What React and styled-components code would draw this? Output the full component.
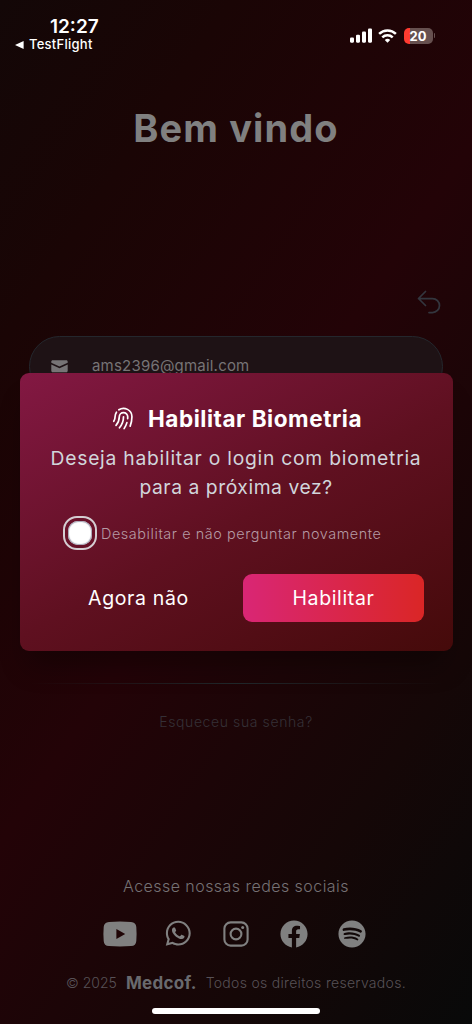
import React from 'react';
import styled, { createGlobalStyle } from 'styled-components';
import { HiOutlineFingerPrint, HiOutlineArrowUturnLeft } from 'react-icons/hi2';
import { FaFacebook, FaSpotify, FaWhatsapp } from 'react-icons/fa';

const App = () => {
    return (<Screen>
        <GlobalStyle />
        <StatusBar>
            <Clock>
                <Time>12:27</Time>
                <BackApp>
                    <svg width='9' height='8' viewBox='0 0 9 8'><path d='M0 4 8.6 0v8z' fill='#fff' /></svg>
                    <span>TestFlight</span>
                </BackApp>
            </Clock>
            <Indicators>
                <svg width='22' height='15' viewBox='0 0 22 15' fill='#fff'>
                    <rect x='0' y='9.5' width='4' height='5.2' rx='1.1' />
                    <rect x='6' y='6.8' width='4' height='7.9' rx='1.1' />
                    <rect x='12' y='3.6' width='4' height='11.1' rx='1.1' />
                    <rect x='18' y='0.4' width='4' height='14.3' rx='1.1' />
                </svg>
                <svg width='19' height='14' viewBox='0 0 19 14' fill='none' stroke='#fff' strokeWidth='2.5'>
                    <path d='M1.1 4.9a12 12 0 0 1 16.8 0' />
                    <path d='M4.3 8.3a7.4 7.4 0 0 1 10.4 0' />
                    <path d='M9.5 13.8 6.8 11a3.8 3.8 0 0 1 5.4 0z' fill='#fff' stroke='none' />
                </svg>
                <Battery>
                    <BatteryBody>20</BatteryBody>
                    <BatteryCap />
                </Battery>
            </Indicators>
        </StatusBar>
        <Title>Bem vindo</Title>
        <BackRow><HiOutlineArrowUturnLeft /></BackRow>
        <EmailField>
            <MailIcon />
            <span>ams2396@gmail.com</span>
        </EmailField>
        <Modal>
            <ModalTitle>
                <HiOutlineFingerPrint />
                <h2>Habilitar Biometria</h2>
            </ModalTitle>
            <Question>
                <Line $spacing='0.75px'>Deseja habilitar o login com biometria</Line>
                <Line $spacing='0.55px'>para a próxima vez?</Line>
            </Question>
            <OptOut>
                <Radio />
                <OptOutLabel>Desabilitar e não perguntar novamente</OptOutLabel>
            </OptOut>
            <Actions>
                <Button>Agora não</Button>
                <Button $primary>Habilitar</Button>
            </Actions>
        </Modal>
        <Divider />
        <Forgot>Esqueceu sua senha?</Forgot>
        <Footer>
            <SocialTitle>Acesse nossas redes sociais</SocialTitle>
            <Socials>
                <Social><YoutubeIcon /></Social>
                <Social $size='28.5px'><FaWhatsapp /></Social>
                <Social><InstagramIcon /></Social>
                <Social $size='28px'><FaFacebook /></Social>
                <Social $size='28px'><FaSpotify /></Social>
            </Socials>
            <Copyright>
                <span>© 2025</span>
                <strong>Medcof.</strong>
                <Rights>Todos os direitos reservados.</Rights>
            </Copyright>
            <HomeIndicator />
        </Footer>
    </Screen>);
}

export default App;

const MailIcon = () => (
    <svg width='17' height='13' viewBox='0 0 17 13' fill='currentColor'>
        <path d='M1.7 0.3h13.6c.8 0 1.4.6 1.4 1.4v1L8.5 6.5.3 2.7v-1C.3.9.9.3 1.7.3z' />
        <path d='M.3 4.5 8.5 8.3l8.2-3.8v6.3c0 .9-.6 1.5-1.4 1.5H1.7c-.8 0-1.4-.6-1.4-1.5z' />
    </svg>
)

const YoutubeIcon = () => (
    <svg width='34' height='26' viewBox='0 0 34 26'>
        <path d='M6 .9Q17 0 28 .9q5 .3 5.3 5.1.6 7 0 14-.3 4.8-5.3 5.1-11 .8-22 0-5-.3-5.3-5.1-.6-7 0-14Q1 1.2 6 .9z' fill='currentColor' />
        <path d='M13.4 8v10l8.8-5z' fill='#1f0406' />
    </svg>
)

const InstagramIcon = () => (
    <svg width='26' height='26' viewBox='0 0 26 26' fill='none' stroke='currentColor' strokeWidth='2.1'>
        <rect x='1.4' y='1.4' width='23.2' height='23.2' rx='6.2' />
        <circle cx='13' cy='13' r='5.4' />
        <circle cx='19.7' cy='6.4' r='1.5' fill='currentColor' stroke='none' />
    </svg>
)

const GlobalStyle = createGlobalStyle`
    * {
        box-sizing: border-box;
    }

    body {
        margin: 0;
        background: #120707;
    }
`

const Screen = styled.div`
    width: 472px;
    height: 1024px;
    display: flex;
    flex-direction: column;
    overflow: hidden;
    font-family: Inter, sans-serif;
    white-space: nowrap;
    background: linear-gradient(124deg, #130707 0%, #1a0505 20%, #230307 49%, #150707 78%, #080909 100%);
`

const StatusBar = styled.div`
    height: 66px;
    padding: 16px 37px 0 15px;
    display: flex;
    justify-content: space-between;
    color: #fff;
`

const Clock = styled.div`
    width: 90px;
`

const Time = styled.div`
    padding-left: 35px;
    font-size: 19px;
    line-height: 21px;
    font-weight: 600;
`

const BackApp = styled.div`
    display: flex;
    align-items: center;
    gap: 5px;
    font-size: 13px;
    line-height: 15px;
    font-weight: 500;
    letter-spacing: 0.25px;
`

const Indicators = styled.div`
    height: 39px;
    display: flex;
    align-items: center;
    gap: 6.5px;
`

const Battery = styled.div`
    display: flex;
    align-items: center;
    gap: 1px;
`

const BatteryBody = styled.div`
    width: 29px;
    height: 16px;
    border-radius: 5px;
    font-size: 13px;
    line-height: 16px;
    font-weight: 700;
    text-align: center;
    background: linear-gradient(90deg, #ff3b30 6px, #66504f 6px);
`

const BatteryCap = styled.div`
    width: 1.5px;
    height: 5px;
    border-radius: 0 2px 2px 0;
    background: #66504f;
`

const Title = styled.h1`
    margin: 40px 0 0;
    text-align: center;
    font-size: 38px;
    line-height: 44px;
    font-weight: 700;
    letter-spacing: 1.1px;
    color: #808080;
`

const BackRow = styled.div`
    height: 28px;
    margin-top: 138px;
    padding-right: 29.5px;
    display: flex;
    justify-content: flex-end;
    color: #33363e;

    svg {
        width: 28px;
        height: 28px;
    }
`

const EmailField = styled.div`
    height: 61px;
    flex: none;
    margin: 20px 29px 0;
    padding: 0 21px;
    display: flex;
    align-items: center;
    gap: 24px;
    border: 1.5px solid #24272d;
    border-radius: 31px;
    background: #1e1215;
    font-size: 15px;
    line-height: 20px;
    letter-spacing: 0.2px;
    color: #777476;

    span {
        margin-bottom: 1px;
    }
`

const Modal = styled.div`
    position: relative;
    height: 278px;
    flex: none;
    margin: -24px 19.5px 0;
    padding: 29px 28.5px 0;
    border-radius: 9px;
    background: linear-gradient(152deg, #831843 0%, #5f1020 52%, #450a0a 100%);
    box-shadow: 0 22px 28px -8px rgba(0, 0, 0, 0.3);
`

const ModalTitle = styled.div`
    height: 32px;
    display: flex;
    align-items: center;
    justify-content: center;
    gap: 11px;
    color: #fff;

    svg {
        width: 27px;
        height: 27px;
    }

    h2 {
        margin: 0;
        font-size: 22.5px;
        font-weight: 700;
        letter-spacing: 0.55px;
    }
`

const Question = styled.div`
    margin-top: 10px;
    text-align: center;
    font-size: 19.3px;
    line-height: 29px;
    color: #d1d5db;
`

const Line = styled.div`
    letter-spacing: ${props => props.$spacing};
`

const OptOut = styled.div`
    height: 34px;
    margin-top: 14px;
    padding-left: 14.5px;
    display: flex;
    align-items: center;
    gap: 4.5px;
`

const Radio = styled.div`
    width: 34px;
    height: 34px;
    border: 2.5px solid #d5cdd2;
    border-radius: 14px;
    display: flex;
    align-items: center;
    justify-content: center;

    &::before {
        content: '';
        width: 24px;
        height: 24px;
        border-radius: 10px;
        background: #fff;
        box-shadow: inset 0 0 1px 1px #a3a4b4;
    }
`

const OptOutLabel = styled.span`
    font-size: 14.4px;
    font-weight: 300;
    letter-spacing: 0.58px;
    color: #b59aa4;
`

const Actions = styled.div`
    margin-top: 23.5px;
    display: grid;
    grid-template-columns: 181px 181px;
    justify-content: space-between;
`

const Button = styled.button`
    height: 48px;
    padding: 0;
    border: none;
    border-radius: 9px;
    background: ${props => props.$primary ? 'linear-gradient(90deg, #d92675, #da2626)' : 'transparent'};
    font-family: inherit;
    font-size: 19.5px;
    letter-spacing: 0.65px;
    color: #fff;
`

const Divider = styled.div`
    height: 1px;
    flex: none;
    margin: 31.5px 29px 0;
    background: linear-gradient(90deg, transparent, #20282b 50%, transparent);
`

const Forgot = styled.div`
    margin-top: 29px;
    text-align: center;
    font-size: 14px;
    line-height: 18px;
    font-weight: 300;
    letter-spacing: 0.6px;
    color: #353036;
`

const Footer = styled.div`
    margin-top: 144px;
    display: flex;
    flex-direction: column;
    align-items: center;
`

const SocialTitle = styled.div`
    font-size: 16px;
    line-height: 22px;
    font-weight: 300;
    letter-spacing: 0.45px;
    color: #757174;
`

const Socials = styled.div`
    margin-top: 19px;
    display: grid;
    grid-template-columns: repeat(5, 58.2px);
    justify-content: center;
`

const Social = styled.div`
    height: 36px;
    display: flex;
    align-items: center;
    justify-content: center;
    color: #808080;

    svg {
        width: ${props => props.$size};
        height: ${props => props.$size};
    }
`

const Copyright = styled.div`
    margin-top: 21px;
    display: flex;
    align-items: center;
    gap: 9px;
    font-size: 14px;
    line-height: 20px;
    font-weight: 300;
    color: #575156;

    strong {
        font-size: 17px;
        font-weight: 700;
        letter-spacing: 0.3px;
        color: #696a6e;
    }
`

const Rights = styled.span`
    letter-spacing: 0.3px;
`

const HomeIndicator = styled.div`
    width: 168px;
    height: 6px;
    margin-top: 15px;
    border-radius: 3px;
    background: #fff;
`
